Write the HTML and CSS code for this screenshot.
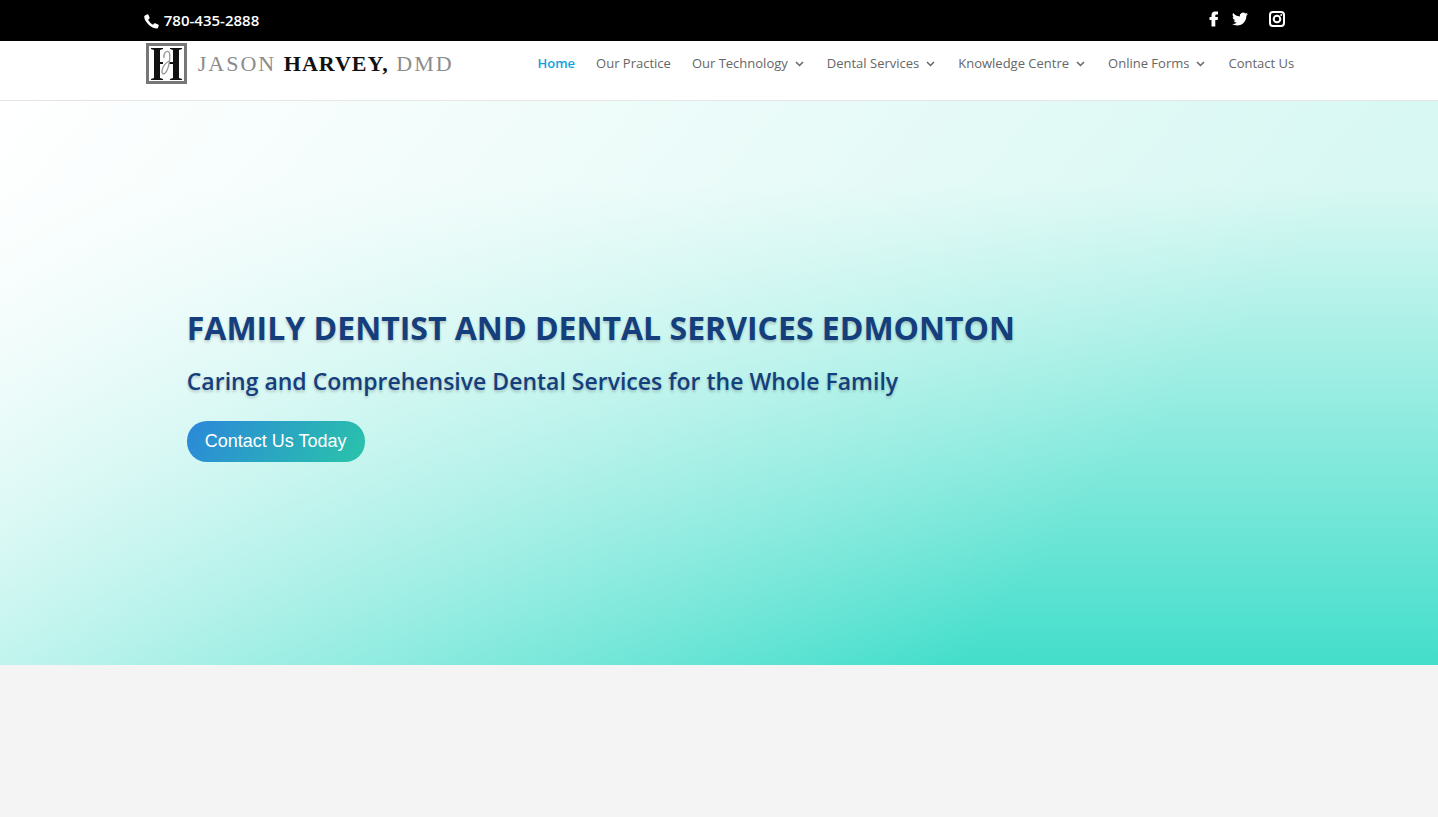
FILE: index.html
```html
<!DOCTYPE html>
<html lang="en">
<head>
    <meta charset="UTF-8">
    <meta name="viewport" content="width=device-width, initial-scale=1.0">
    <title>Jason Harvey, DMD</title>
    <link rel="stylesheet" href="styles.css">
</head>
<body>
    <div class="top-bar">
        <div class="container top-inner">
            <a href="tel:7804352888" class="phone">
                <svg width="15" height="15" viewBox="0 0 15 15" aria-hidden="true">
                    <path d="M1 1.4 3.2 0.2Q4 0 4.4 0.8L5.6 3.6Q5.8 4.3 5.2 4.8L4.1 5.8Q5.6 8.9 9 10.7L10 9.6Q10.5 9 11.2 9.3L14.1 10.5Q14.9 10.9 14.7 11.7L14.1 13.6Q13.9 14.4 13 14.5Q8.5 14.5 4.4 10.5Q0.3 6.4 0.2 2.6Q0.2 1.9 1 1.4Z" fill="#fff"/>
                </svg>
                <span>780-435-2888</span>
            </a>
            <div class="social">
                <a href="#" aria-label="Facebook">
                    <svg width="10" height="16" viewBox="0 0 10 16">
                        <path d="M2.5 15.5V9H0.5V6H2.5V4.2Q2.5 0.5 6 0.5H9V3.5H7.2Q6.3 3.5 6.3 4.5V6H9L8.7 9H6.3V15.5Z" fill="#fff"/>
                    </svg>
                </a>
                <a href="#" aria-label="Twitter">
                    <svg width="16" height="16" viewBox="0 0 24 24">
                        <path d="M23.95 4.57a10 10 0 0 1-2.82.77 4.96 4.96 0 0 0 2.16-2.72c-.95.55-2 .95-3.12 1.18a4.92 4.92 0 0 0-8.39 4.48C7.69 8.09 4.07 6.13 1.64 3.16a4.82 4.82 0 0 0-.67 2.48c0 1.71.87 3.21 2.19 4.1a4.9 4.9 0 0 1-2.23-.62v.06a4.92 4.92 0 0 0 3.95 4.83 5 5 0 0 1-2.21.08 4.94 4.94 0 0 0 4.6 3.42A9.87 9.87 0 0 1 0 19.54a14 14 0 0 0 7.55 2.21c9.05 0 14-7.5 14-13.98 0-.21 0-.42-.02-.63a9.94 9.94 0 0 0 2.42-2.57Z" fill="#fff"/>
                    </svg>
                </a>
                <a href="#" class="instagram" aria-label="Instagram">
                    <svg width="16" height="16" viewBox="0 0 16 16">
                        <rect x="1" y="1" width="14" height="14" rx="3" fill="none" stroke="#fff" stroke-width="2"/>
                        <circle cx="8" cy="8" r="3.3" fill="none" stroke="#fff" stroke-width="2"/>
                        <circle cx="12.2" cy="3.9" r="1" fill="#fff"/>
                    </svg>
                </a>
            </div>
        </div>
    </div>

    <header class="main-header">
        <div class="container header-inner">
            <a href="#" class="logo">
                <svg width="41" height="41" viewBox="0 0 41 41" aria-hidden="true">
                    <rect x="1.5" y="1.5" width="38" height="38" fill="#fff" stroke="#777" stroke-width="3"/>
                    <path d="M5 5H17V6L14 7V19H17V21H14V35L17 36V37H5V36L8 35V7L5 6Z" fill="#111"/>
                    <path d="M24 5H36V6L33 7V35L36 36V37H24V36L27 35V21H23V19H27V7L24 6Z" fill="#111"/>
                    <path d="M18 15C17 11 20 7 23 9C25 13 23 28 18 31C14 31 16 22 23 18" fill="none" stroke="#999" stroke-width="1.3"/>
                </svg>
                <span class="logo-text">JASON <b>HARVEY,</b> DMD</span>
            </a>
            <nav class="nav-bar">
                <ul>
                    <li><a href="#" class="active">Home</a></li>
                    <li><a href="#">Our Practice</a></li>
                    <li><a href="#">Our Technology <svg class="arrow" width="9" height="6" viewBox="0 0 9 6"><path d="M1 1 4.5 4.5 8 1"/></svg></a></li>
                    <li><a href="#">Dental Services <svg class="arrow" width="9" height="6" viewBox="0 0 9 6"><path d="M1 1 4.5 4.5 8 1"/></svg></a></li>
                    <li><a href="#">Knowledge Centre <svg class="arrow" width="9" height="6" viewBox="0 0 9 6"><path d="M1 1 4.5 4.5 8 1"/></svg></a></li>
                    <li><a href="#">Online Forms <svg class="arrow" width="9" height="6" viewBox="0 0 9 6"><path d="M1 1 4.5 4.5 8 1"/></svg></a></li>
                    <li><a href="#">Contact Us</a></li>
                </ul>
            </nav>
        </div>
    </header>

    <section class="hero">
        <div class="container">
            <div class="hero-content">
                <h1>FAMILY DENTIST AND DENTAL SERVICES EDMONTON</h1>
                <p>Caring and Comprehensive Dental Services for the Whole Family</p>
                <a href="#" class="hero-button">Contact Us Today</a>
            </div>
        </div>
    </section>
</body>
</html>
```
FILE: styles.css
```css
* {
    margin: 0;
    padding: 0;
    box-sizing: border-box;
}

body {
    background-color: #f4f4f4;
    font-family: "Open Sans", sans-serif;
}

a {
    text-decoration: none;
}

svg {
    display: block;
}

.container {
    width: 80%;
    margin: 0 auto;
}

.top-bar {
    background-color: #000;
}

.top-inner {
    display: flex;
    justify-content: space-between;
    align-items: center;
    height: 41px;
}

.phone {
    display: flex;
    align-items: center;
    gap: 5px;
    padding-bottom: 1px;
    font-size: 15px;
    line-height: 20px;
    font-weight: 600;
    color: #fff;
}

.phone svg {
    margin-top: 2px;
}

.social {
    display: flex;
    gap: 13px;
    padding: 0 9px 4px 0;
}

.instagram {
    margin-left: 8px;
}

.main-header {
    background-color: #fff;
    border-bottom: 1px solid #e5e5e5;
}

.header-inner {
    display: flex;
    justify-content: space-between;
    height: 59px;
}

.logo {
    display: flex;
    align-items: center;
    gap: 11px;
    height: 45px;
    padding-left: 2px;
}

.logo-text {
    font-family: "Liberation Serif", serif;
    font-size: 22px;
    letter-spacing: 2px;
    color: #8c8c8c;
    white-space: nowrap;
}

.logo-text b {
    letter-spacing: 1px;
    color: #111;
}

.nav-bar ul {
    display: flex;
    gap: 21px;
    height: 44px;
    align-items: center;
    list-style: none;
}

.nav-bar a {
    display: flex;
    align-items: center;
    gap: 7px;
    font-size: 13px;
    font-weight: 500;
    color: #666;
    white-space: nowrap;
}

.nav-bar .active {
    font-weight: 600;
    color: #0ca3df;
}

.arrow {
    margin: 2px 2px 0 0;
    fill: none;
    stroke: #666;
    stroke-width: 1.5;
}

.hero {
    display: flex;
    align-items: center;
    min-height: 564px;
    padding-top: 5px;
    background: linear-gradient(130deg, #fff 0%, rgba(255, 255, 255, 0) 75%),
        linear-gradient(180deg, #d8f8f3 0%, #d8f8f3 15%, #43decb 100%);
}

.hero-content {
    padding-left: 43px;
    color: #153e7c;
    text-shadow: 0 2px 3px rgba(0, 0, 0, 0.2);
}

.hero-content h1 {
    font-size: 32px;
    line-height: 36px;
    font-weight: 700;
}

.hero-content p {
    margin: 17px 0 22px;
    font-size: 23px;
    line-height: 36px;
    font-weight: 600;
}

.hero-button {
    display: inline-block;
    padding: 0 18px;
    border-radius: 20px;
    background: linear-gradient(125deg, #2b87da 0%, #29c4a9 100%);
    font-family: "Liberation Sans", Arial, sans-serif;
    font-size: 18px;
    line-height: 41px;
    color: #fff;
    text-shadow: none;
}
```
